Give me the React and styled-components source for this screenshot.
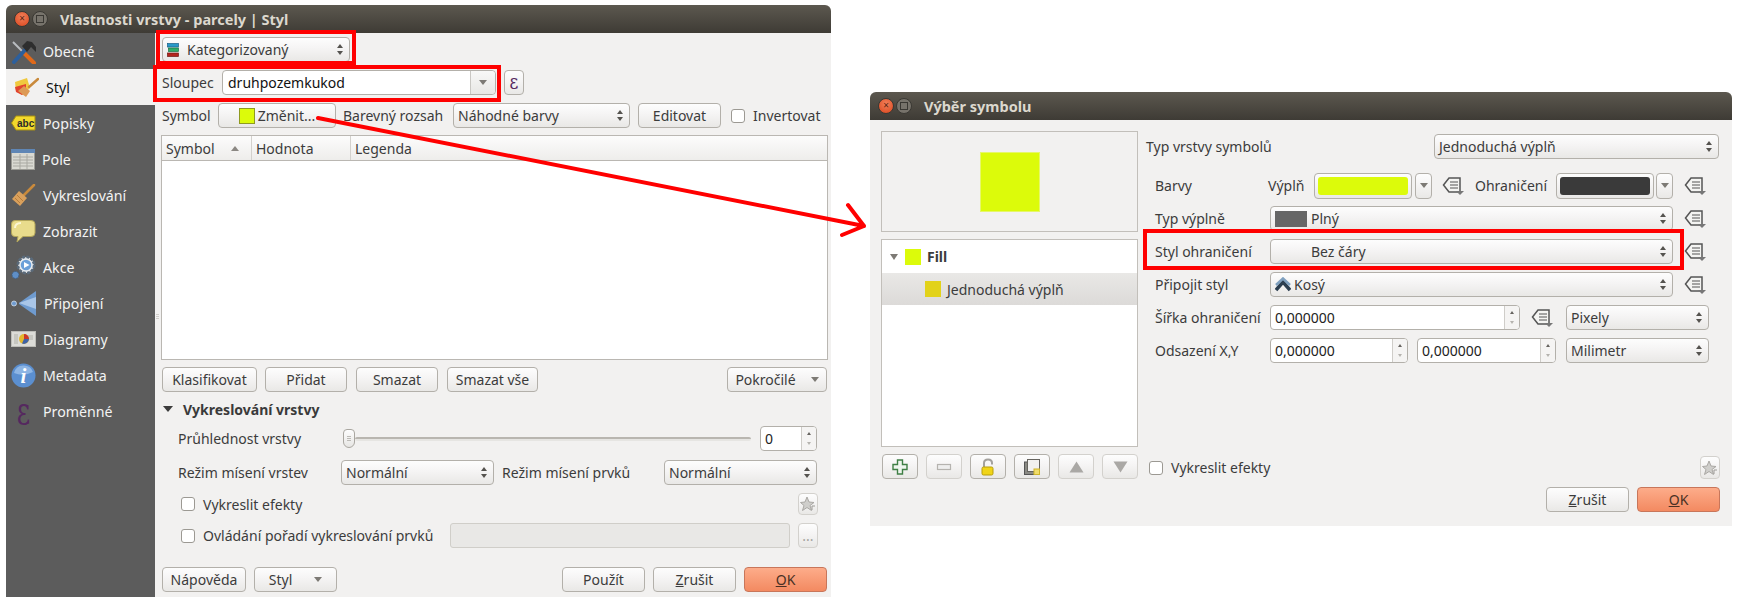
import React from 'react'
import styled, { createGlobalStyle, css } from 'styled-components'

const Global = createGlobalStyle`
    html, body { margin: 0; padding: 0; background: #fff; overflow: hidden; }
    body { font-family: 'Noto Sans', sans-serif; font-size: 14px; color: #3c3c3c; }
    * { box-sizing: border-box; }
`

const Page = styled.div`
    position: relative;
    width: 1743px;
    height: 597px;
    overflow: hidden;
    display: flex;
    align-items: flex-start;
    padding: 5px 0 0 6px;
    gap: 39px;
`

const Window = styled.div`
    width: ${p => p.$w}px;
    margin-top: ${p => p.$mt || 0}px;
    background: #f2f1f0;
    border-radius: 6px 6px 0 0;
    display: flex;
    flex-direction: column;
`

const TitleBar = styled.div`
    height: 28px;
    flex: none;
    display: flex;
    align-items: center;
    padding-left: 8px;
    border-radius: 6px 6px 0 0;
    background: linear-gradient(#5c584f, #3e3b35);
`

const CloseDot = styled.div`
    width: 16px;
    height: 16px;
    border-radius: 50%;
    background: radial-gradient(circle at 50% 35%, #f2805a, #d9451c);
    border: 1px solid #3a3833;
    color: #5a2412;
    font-size: 10px;
    line-height: 13px;
    text-align: center;
`

const MaxDot = styled.div`
    width: 16px;
    height: 16px;
    margin-left: 2px;
    border-radius: 50%;
    background: #77736b;
    border: 1px solid #3a3833;
    display: flex;
    align-items: center;
    justify-content: center;
    &::after {
        content: '';
        width: 6px;
        height: 6px;
        border: 1px solid #3a3833;
    }
`

const TitleText = styled.div`
    margin-left: 12px;
    font-weight: 700;
    font-size: 14.5px;
    color: #dcd8ce;
`

const MainBody = styled.div`
    display: flex;
    height: 564px;
`

const Sidebar = styled.div`
    width: 149px;
    flex: none;
    background: #5c5c5c;
`

const SideItem = styled.div`
    height: 36px;
    display: flex;
    align-items: center;
    padding-left: ${p => p.$active ? 8 : 5}px;
    color: ${p => p.$active ? '#111' : '#f3f3f3'};
    background: ${p => p.$active ? '#f2f1f0' : 'transparent'};
    font-size: 14.2px;
    svg { flex: none; margin-right: 7px; }
`

const Content = styled.div`
    position: relative;
    flex: 1;
    padding-left: 7px;
    &::before {
        content: '';
        position: absolute;
        left: 1px;
        top: 281px;
        width: 3px;
        height: 6px;
        background: repeating-linear-gradient(#cfcdc9 0 1px, transparent 1px 2px);
    }
`

const Row = styled.div`
    display: flex;
    align-items: center;
    height: ${p => p.$h || 25}px;
    margin-top: ${p => p.$mt || 0}px;
    margin-left: ${p => p.$ml || 0}px;
    width: ${p => p.$w ? `${p.$w}px` : 'auto'};
`

const Label = styled.span`
    flex: none;
    white-space: nowrap;
    width: ${p => p.$w ? `${p.$w}px` : 'auto'};
    margin-left: ${p => p.$ml || 0}px;
    color: #3c3c3c;
`

const raised = css`
    flex: none;
    height: 25px;
    border: 1px solid #b3b0aa;
    border-radius: 4px;
    background: linear-gradient(#fdfdfd, #f6f5f5 40%, #e9e8e6);
    color: #3c3c3c;
`

const Button = styled.div`
    ${raised}
    width: ${p => p.$w}px;
    margin-left: ${p => p.$ml || 0}px;
    display: flex;
    align-items: center;
    justify-content: center;
    white-space: nowrap;
    ${p => p.$auto && 'margin-left: auto;'}
    ${p => p.$primary && css`
        background: linear-gradient(#fdac8a, #f38a61);
        border-color: #c8765a;
        color: #4a3024;
    `}
    ${p => p.$off && css`
        opacity: 0.75;
        border-color: #cfccc8;
    `}
`

const MenuCaret = styled.span`
    width: 0;
    height: 0;
    margin-left: ${p => p.$ml || 0}px;
    border-left: 4px solid transparent;
    border-right: 4px solid transparent;
    border-top: 5px solid #7d7a75;
`

const ComboBox = styled.div`
    ${raised}
    width: ${p => p.$w}px;
    margin-left: ${p => p.$ml || 0}px;
    display: flex;
    align-items: center;
    padding: 0 6px 0 4px;
    white-space: nowrap;
`

const ComboText = styled.span`
    flex: 1;
    margin-left: ${p => p.$ml || 0}px;
`

const Steps = styled.span`
    flex: none;
    display: flex;
    flex-direction: column;
    gap: 3px;
    &::before, &::after {
        content: '';
        width: 0;
        height: 0;
        border-left: 3px solid transparent;
        border-right: 3px solid transparent;
    }
    &::before { border-bottom: 4px solid #55534f; }
    &::after { border-top: 4px solid #55534f; }
`

const Combo = ({ w, ml, textMl, icon, children }) => (
    <ComboBox $w={w} $ml={ml}>
        {icon}
        <ComboText $ml={textMl}>{children}</ComboText>
        <Steps />
    </ComboBox>
)

const ColumnInput = styled.div`
    flex: none;
    width: 274px;
    height: 25px;
    display: flex;
    background: #fff;
    border: 1px solid #b3b0aa;
    border-radius: 4px;
    color: #111;
`

const ColumnText = styled.div`
    flex: 1;
    padding-left: 5px;
    line-height: 23px;
`

const ColumnDrop = styled.div`
    width: 25px;
    border-left: 1px solid #c9c7c3;
    border-radius: 0 4px 4px 0;
    background: linear-gradient(#f8f8f7, #e8e7e5);
    display: flex;
    align-items: center;
    justify-content: center;
`

const Check = styled.span`
    flex: none;
    width: 14px;
    height: 14px;
    margin-left: ${p => p.$ml || 0}px;
    background: #fff;
    border: 1px solid #9c9993;
    border-radius: 3px;
`

const Table = styled.div`
    width: 667px;
    height: 225px;
    margin: 7px 0 0 -1px;
    background: #fff;
    border: 1px solid #bab7b2;
`

const TableHead = styled.div`
    height: 25px;
    display: flex;
    border-bottom: 1px solid #bab7b2;
    background: linear-gradient(#fcfcfc, #eeedeb);
`

const HeadCell = styled.div`
    width: ${p => p.$w ? `${p.$w}px` : 'auto'};
    flex: ${p => p.$w ? 'none' : 1};
    display: flex;
    align-items: center;
    justify-content: space-between;
    padding: 1px 12px 0 4px;
    border-right: ${p => p.$w ? '1px solid #d3d1cd' : 'none'};
`

const SortMark = styled.span`
    width: 0;
    height: 0;
    border-left: 4px solid transparent;
    border-right: 4px solid transparent;
    border-bottom: 5px solid #8b8883;
`

const GroupHead = styled.div`
    height: 16px;
    margin-top: 9px;
    display: flex;
    align-items: center;
    padding-left: 1px;
    font-weight: 700;
    color: #3a3a3a;
    &::before {
        content: '';
        width: 0;
        height: 0;
        margin-right: 10px;
        border-left: 5.5px solid transparent;
        border-right: 5.5px solid transparent;
        border-top: 6px solid #3c3c3c;
    }
`

const Slider = styled.div`
    flex: none;
    width: 408px;
    margin-left: 2px;
    display: flex;
    align-items: center;
`

const SliderHandle = styled.div`
    flex: none;
    width: 12px;
    height: 19px;
    border: 1px solid #aaa7a1;
    border-radius: 4px 4px 6px 6px;
    background: linear-gradient(#fdfdfd, #e7e6e4);
    display: flex;
    align-items: center;
    justify-content: center;
    &::after {
        content: '';
        width: 4px;
        height: 5px;
        background: repeating-linear-gradient(#bcbab6 0 1px, transparent 1px 2px);
    }
`

const SliderTrack = styled.div`
    flex: 1;
    height: 4px;
    border-radius: 2px;
    background: linear-gradient(#b9b6b0 0 2px, #e6e5e2 2px);
`

const SpinBox = styled.div`
    flex: none;
    width: ${p => p.$w}px;
    height: 25px;
    margin-left: ${p => p.$ml || 0}px;
    display: flex;
    background: #fff;
    border: 1px solid #b3b0aa;
    border-radius: 4px;
    overflow: hidden;
`

const SpinText = styled.div`
    flex: 1;
    padding-left: 4px;
    line-height: 23px;
    color: #222;
`

const SpinSteps = styled.div`
    flex: none;
    width: 15px;
    background: #f5f4f3;
    border-left: 1px solid #cfcdc9;
    display: flex;
    flex-direction: column;
    align-items: center;
    justify-content: center;
    gap: 7px;
    &::before, &::after {
        content: '';
        width: 0;
        height: 0;
        border-left: 2.5px solid transparent;
        border-right: 2.5px solid transparent;
    }
    &::before { border-bottom: 3px solid #66635f; }
    &::after { border-top: 3px solid #b5b3af; }
`

const DisabledField = styled.div`
    flex: none;
    width: 340px;
    height: 25px;
    margin-left: auto;
    background: #e9e8e6;
    border: 1px solid #d0cec9;
    border-radius: 3px;
`

const ToolButton = styled.div`
    ${raised}
    width: ${p => p.$w}px;
    height: ${p => p.$h || 25}px;
    margin-left: ${p => p.$ml || 0}px;
    display: flex;
    align-items: center;
    justify-content: center;
    ${p => p.$auto && 'margin-left: auto;'}
    ${p => p.$off && css`
        border-color: #d3d1cd;
        color: #a5a39f;
    `}
`

const Epsilon = styled.span`
    flex: none;
    width: ${p => p.$box}px;
    margin-right: ${p => p.$mr || 0}px;
    text-align: center;
    font-family: 'DejaVu Serif', serif;
    font-size: ${p => p.$size}px;
    line-height: 25px;
    color: #55285f;
    transform: scaleY(${p => p.$stretch || 1});
`

const Highlight = styled.div`
    position: relative;
    flex: none;
    display: flex;
    align-items: center;
    &::after {
        content: '';
        position: absolute;
        top: ${p => p.$t}px;
        right: ${p => p.$r}px;
        bottom: ${p => p.$b}px;
        left: ${p => p.$l}px;
        border: 4px solid #ff0000;
        pointer-events: none;
    }
`

const ArrowLayer = styled.svg`
    position: absolute;
    left: 0;
    top: 0;
    pointer-events: none;
`

const SymbolBody = styled.div`
    display: flex;
    height: 359px;
`

const LeftColumn = styled.div`
    flex: none;
    width: 268px;
    padding-left: 11px;
    padding-top: 11px;
`

const Preview = styled.div`
    height: 101px;
    border: 1px solid #c2bfba;
    display: flex;
    align-items: center;
    justify-content: center;
`

const PreviewSwatch = styled.div`
    width: 60px;
    height: 60px;
    background: #dcfb0a;
    border: 1px solid #e6f76a;
`

const LayerList = styled.div`
    height: 208px;
    margin-top: 7px;
    background: #fff;
    border: 1px solid #c2bfba;
`

const LayerRow = styled.div`
    height: ${p => p.$h}px;
    display: flex;
    align-items: center;
    padding-left: ${p => p.$pad}px;
    ${p => p.$selected && 'background: linear-gradient(#e9e8e6, #dcdad8);'}
    ${p => p.$bold && 'font-weight: 700;'}
`

const TreeCaret = styled.span`
    width: 0;
    height: 0;
    margin-right: 7px;
    border-left: 4px solid transparent;
    border-right: 4px solid transparent;
    border-top: 6px solid #7d7a75;
`

const LayerSwatch = styled.span`
    flex: none;
    width: ${p => p.$w || 16}px;
    height: 16px;
    margin-right: ${p => p.$mr ?? 6}px;
    background: ${p => p.$color};
    ${p => p.$framed && 'border: 1px solid #8f9a20;'}
`

const ToolRow = styled.div`
    display: flex;
    gap: 8px;
    margin: 7px 0 0 1px;
`

const RightColumn = styled.div`
    flex: 1;
    display: flex;
    flex-direction: column;
    margin-left: 8px;
    padding: 14px 12px 0 0;
`

const ColorButton = styled.div`
    ${raised}
    width: 98px;
    height: 26px;
    padding: 3px;
`

const ColorFill = styled.div`
    height: 100%;
    border-radius: 3px;
    background: ${p => p.$color};
`

const ColorDrop = styled.div`
    ${raised}
    width: 17px;
    height: 26px;
    margin-left: ${p => p.$ml}px;
    display: flex;
    align-items: center;
    justify-content: center;
`

const BottomCheck = styled.div`
    display: flex;
    align-items: center;
    height: 23px;
    margin-top: auto;
    padding-left: 3px;
`

const Footer = styled.div`
    display: flex;
    justify-content: flex-end;
    gap: 8px;
    padding: 8px 12px 14px 0;
`

const Svg = ({ w, h, ml, children }) => (
    <svg width={w} height={h} viewBox={`0 0 ${w} ${h}`} style={ml ? { marginLeft: ml, flex: 'none' } : { flex: 'none' }}>
        {children}
    </svg>
)

const ToolsIcon = () => (
    <Svg w={25} h={25}>
        <path d="M2 3 L13 14" stroke="#b9bcc0" strokeWidth="2" />
        <path d="M13 14 L23 24" stroke="#e0691a" strokeWidth="4" strokeLinecap="round" />
        <path d="M3 23 L15 10" stroke="#2c5f9c" strokeWidth="4" strokeLinecap="round" />
        <path d="M11 7 L16 2 L21 3 L25 8 L25 13 L20 8 L16 13 Z" fill="#2e2e2e" />
    </Svg>
)

const BrushPaintIcon = () => (
    <Svg w={25} h={20}>
        <path d="M1 5 L13 1 L16 11 L8 18 L2 14 Z" fill="#f0c93e" />
        <path d="M1 10 L12 7 L12 15 L8 18 L2 15 Z" fill="#e2432e" />
        <path d="M15 10 L24 2" stroke="#c98a3c" strokeWidth="2.5" strokeLinecap="round" />
        <path d="M10 9 L16 14 L12 20 L4 14 Z" fill="#dd9a55" />
    </Svg>
)

const LabelIcon = () => (
    <Svg w={25} h={16}>
        <path d="M0.5 8 L5 1 H24 V15 H5 Z" fill="#f3d92c" stroke="#a78f12" />
        <text x="6" y="12" fontFamily="Liberation Sans" fontSize="10" fontWeight="700" fill="#2a2a2a">abc</text>
    </Svg>
)

const TableIcon = () => (
    <Svg w={24} h={21}>
        <rect x="0.5" y="0.5" width="23" height="20" fill="#d9d9d2" stroke="#9a9a94" />
        <rect x="0" y="0" width="24" height="4" fill="#5f86b5" />
        <path d="M2 8 H22 M2 11 H22 M2 14 H22 M2 17 H22 M9 5 V20 M16 5 V20" stroke="#a9a9a2" strokeWidth="1" />
    </Svg>
)

const BrushIcon = () => (
    <Svg w={25} h={23}>
        <path d="M13 11 L23 1" stroke="#c98a3c" strokeWidth="2.5" strokeLinecap="round" />
        <path d="M8 7 L16 14 L9 22 L1 15 Z" fill="#d9a05c" />
        <path d="M6 11 L12 17 M4 14 L9 19" stroke="#b67c3a" strokeWidth="1" />
    </Svg>
)

const BubbleIcon = () => (
    <Svg w={25} h={23}>
        <path d="M4 0.5 H20 Q24 0.5 24 4 V13 Q24 16.5 20 16.5 H12 L6 22 L7 16.5 H4 Q0.5 16.5 0.5 13 V4 Q0.5 0.5 4 0.5 Z" fill="#e9dc8c" stroke="#b3a65a" />
        <path d="M4 8 Q4 3 10 3" stroke="#fbf6d4" strokeWidth="2" fill="none" />
    </Svg>
)

const GearIcon = () => (
    <Svg w={25} h={26}>
        <circle cx="15" cy="11" r="8" fill="#dfe4ea" stroke="#5a6a7a" strokeWidth="3" strokeDasharray="3 1.2" />
        <circle cx="15" cy="11" r="6" fill="#6a9fd8" stroke="#e6eaee" strokeWidth="1.5" />
        <path d="M13 8 L18.5 11 L13 14 Z" fill="#fff" />
        <circle cx="4.5" cy="21" r="3.5" fill="#5f8fc7" stroke="#3f5f86" strokeDasharray="2 1" />
    </Svg>
)

const ConnectIcon = () => (
    <Svg w={26} h={25}>
        <path d="M8 12 L25 0 V25 L8 13 Z" fill="#6f9bcf" />
        <path d="M8 12 L25 6 V18 Z" fill="#a9c6e8" />
        <circle cx="3" cy="12.5" r="2.5" fill="#6f9bcf" stroke="#dfe9f5" strokeWidth="0.7" />
    </Svg>
)

const DiagramIcon = () => (
    <Svg w={25} h={16}>
        <rect x="0.5" y="0.5" width="24" height="15" fill="#dcdcd8" stroke="#bdbdb8" />
        <path d="M3 3 H7 V13 H3 Z M17 4 H22 V9 H17 Z" fill="#c6c6c0" />
        <circle cx="13" cy="8" r="5" fill="#e4b72e" />
        <path d="M13 8 V3 A5 5 0 0 1 18 8 Z" fill="#c9362c" />
        <path d="M13 8 H18 A5 5 0 0 1 11 12.5 Z" fill="#3f63a8" />
    </Svg>
)

const InfoIcon = () => (
    <Svg w={25} h={25}>
        <circle cx="12.5" cy="12.5" r="12" fill="#5b8fd0" />
        <path d="M3 10 A10 10 0 0 1 22 9 Q12 14 3 10 Z" fill="#8db5e4" />
        <text x="12.5" y="20" textAnchor="middle" fontFamily="Liberation Serif" fontSize="21" fontWeight="700" fontStyle="italic" fill="#fff">i</text>
    </Svg>
)

const sections = [
    { label: 'Obecné', icon: <ToolsIcon /> },
    { label: 'Styl', icon: <BrushPaintIcon />, active: true },
    { label: 'Popisky', icon: <LabelIcon /> },
    { label: 'Pole', icon: <TableIcon /> },
    { label: 'Vykreslování', icon: <BrushIcon /> },
    { label: 'Zobrazit', icon: <BubbleIcon /> },
    { label: 'Akce', icon: <GearIcon /> },
    { label: 'Připojení', icon: <ConnectIcon /> },
    { label: 'Diagramy', icon: <DiagramIcon /> },
    { label: 'Metadata', icon: <InfoIcon /> },
    { label: 'Proměnné', icon: <Epsilon $box={25} $mr={7} $size={26} $stretch={1.5}>ε</Epsilon> },
]

const RendererIcon = () => (
    <Svg w={12} h={14}>
        <rect x="0.5" y="0.5" width="11" height="3.5" fill="#2a9ac9" stroke="#1c5f86" strokeWidth="0.7" />
        <rect x="1.5" y="5" width="10" height="3.5" fill="#2fae6a" stroke="#1c6f43" strokeWidth="0.7" />
        <rect x="0.5" y="10" width="11" height="3.5" fill="#b3261e" stroke="#701a14" strokeWidth="0.7" />
    </Svg>
)

const DataIcon = ({ ml }) => (
    <Svg w={23} h={20} ml={ml}>
        <path d="M1.5 9 L7 2 H18 V16 H7 Z" fill="#f4f4f2" stroke="#555" strokeWidth="1.5" />
        <path d="M8 6 H16 M8 9 H16 M8 12 H16" stroke="#555" strokeWidth="1" />
        <path d="M14 15 H22 L18 19 Z" fill="#777" />
    </Svg>
)

const StarIcon = () => (
    <Svg w={16} h={16}>
        <path d="M7 1 L9 6 L14 6.5 L10 9.5 L11.5 14.5 L7 11.5 L2.5 14.5 L4 9.5 L0.5 6.5 L5 6 Z" fill="#cfcecb" stroke="#aaa8a4" />
        <path d="M12 14 V10 H15" stroke="#9d9b97" fill="none" />
    </Svg>
)

const MiterIcon = () => (
    <Svg w={16} h={16}>
        <path d="M1 13 L8 5 L15 13" stroke="#2c3e50" strokeWidth="3.5" fill="none" />
        <path d="M1 8 L8 1.5 L15 8" stroke="#7fa0bf" strokeWidth="2.5" fill="none" />
    </Svg>
)

const PlusIcon = () => (
    <Svg w={16} h={16}>
        <path d="M5.5 1 H10.5 V5.5 H15 V10.5 H10.5 V15 H5.5 V10.5 H1 V5.5 H5.5 Z" fill="#eef5ee" stroke="#3f7f45" strokeWidth="1.4" />
    </Svg>
)

const MinusIcon = () => (
    <Svg w={16} h={8}>
        <rect x="1.5" y="1.5" width="13" height="5" fill="#eee" stroke="#b5b3af" strokeWidth="1.2" />
    </Svg>
)

const LockIcon = () => (
    <Svg w={14} h={18}>
        <path d="M3 9 V5 Q3 1.5 7 1.5 Q11 1.5 11 5 V6.5" stroke="#a3a19d" strokeWidth="2" fill="none" />
        <rect x="1" y="9" width="11" height="8" rx="1.5" fill="#f0d418" stroke="#b79d0c" />
    </Svg>
)

const DuplicateIcon = () => (
    <Svg w={16} h={16}>
        <rect x="0.5" y="3" width="11" height="12.5" fill="#8a8a84" stroke="#555" />
        <rect x="3.5" y="0.5" width="12" height="12" fill="#f2f1ef" stroke="#66645f" />
        <rect x="10" y="10" width="5.5" height="5.5" fill="#f1dd6a" stroke="#cdb42a" />
    </Svg>
)

const UpIcon = () => (
    <Svg w={15} h={12}>
        <path d="M7.5 0.5 L14.5 11.5 H0.5 Z" fill="#aaa8a5" />
    </Svg>
)

const DownIcon = () => (
    <Svg w={15} h={12}>
        <path d="M7.5 11.5 L14.5 0.5 H0.5 Z" fill="#aaa8a5" />
    </Svg>
)

const App = () => (
    <Page>
        <Global />
        <Window $w={825}>
            <TitleBar>
                <CloseDot>×</CloseDot>
                <MaxDot />
                <TitleText>Vlastnosti vrstvy - parcely | Styl</TitleText>
            </TitleBar>
            <MainBody>
                <Sidebar>
                    {sections.map(s => (
                        <SideItem key={s.label} $active={s.active}>
                            {s.icon}
                            {s.label}
                        </SideItem>
                    ))}
                </Sidebar>
                <Content>
                    <Row $mt={4}>
                        <Highlight $t={-7} $r={-6} $b={-3} $l={-6}>
                            <Combo w={188} icon={<RendererIcon />} textMl={8}>Kategorizovaný</Combo>
                        </Highlight>
                    </Row>
                    <Row $mt={8}>
                        <Highlight $t={-5} $r={-5} $b={-7} $l={-9}>
                            <Label $w={60}>Sloupec</Label>
                            <ColumnInput>
                                <ColumnText>druhpozemkukod</ColumnText>
                                <ColumnDrop><MenuCaret /></ColumnDrop>
                            </ColumnInput>
                        </Highlight>
                        <ToolButton $w={20} $ml={8}>
                            <Epsilon $box={18} $size={17} $stretch={1.2}>ε</Epsilon>
                        </ToolButton>
                    </Row>
                    <Row $mt={8}>
                        <Label $w={56}>Symbol</Label>
                        <Button $w={118}>
                            <LayerSwatch $color="#dcfb0a" $framed $mr={3} />
                            Změnit...
                        </Button>
                        <Label $w={110} $ml={7}>Barevný rozsah</Label>
                        <Combo w={177}>Náhodné barvy</Combo>
                        <Button $w={83} $ml={8}>Editovat</Button>
                        <Check $ml={10} />
                        <Label $ml={8}>Invertovat</Label>
                    </Row>
                    <Table>
                        <TableHead>
                            <HeadCell $w={90}>Symbol<SortMark /></HeadCell>
                            <HeadCell $w={99}>Hodnota</HeadCell>
                            <HeadCell>Legenda</HeadCell>
                        </TableHead>
                    </Table>
                    <Row $mt={7} $w={665}>
                        <Button $w={95}>Klasifikovat</Button>
                        <Button $w={82} $ml={8}>Přidat</Button>
                        <Button $w={82} $ml={9}>Smazat</Button>
                        <Button $w={91} $ml={9}>Smazat vše</Button>
                        <Button $w={100} $auto>Pokročilé<MenuCaret $ml={15} /></Button>
                    </Row>
                    <GroupHead>Vykreslování vrstvy</GroupHead>
                    <Row $mt={9}>
                        <Label $w={163} $ml={16}>Průhlednost vrstvy</Label>
                        <Slider>
                            <SliderHandle />
                            <SliderTrack />
                        </Slider>
                        <SpinBox $w={57} $ml={9}>
                            <SpinText>0</SpinText>
                            <SpinSteps />
                        </SpinBox>
                    </Row>
                    <Row $mt={9}>
                        <Label $w={163} $ml={16}>Režim mísení vrstev</Label>
                        <Combo w={153}>Normální</Combo>
                        <Label $w={162} $ml={8}>Režim mísení prvků</Label>
                        <Combo w={153}>Normální</Combo>
                    </Row>
                    <Row $mt={8} $h={22} $w={656}>
                        <Check $ml={19} />
                        <Label $ml={8}>Vykreslit efekty</Label>
                        <ToolButton $w={20} $h={22} $auto $off><StarIcon /></ToolButton>
                    </Row>
                    <Row $mt={8} $w={656}>
                        <Check $ml={19} />
                        <Label $ml={8}>Ovládání pořadí vykreslování prvků</Label>
                        <DisabledField />
                        <ToolButton $w={20} $ml={8} $off>...</ToolButton>
                    </Row>
                    <Row $mt={19} $w={665}>
                        <Button $w={84}>Nápověda</Button>
                        <Button $w={83} $ml={8}>Styl<MenuCaret $ml={22} /></Button>
                        <Button $w={83} $auto>Použít</Button>
                        <Button $w={83} $ml={8}><span><u>Z</u>rušit</span></Button>
                        <Button $w={83} $ml={8} $primary><span><u>O</u>K</span></Button>
                    </Row>
                </Content>
            </MainBody>
        </Window>

        <Window $w={862} $mt={87}>
            <TitleBar>
                <CloseDot>×</CloseDot>
                <MaxDot />
                <TitleText>Výběr symbolu</TitleText>
            </TitleBar>
            <SymbolBody>
                <LeftColumn>
                    <Preview><PreviewSwatch /></Preview>
                    <LayerList>
                        <LayerRow $h={33} $pad={8} $bold>
                            <TreeCaret />
                            <LayerSwatch $color="#dcfb0a" />
                            Fill
                        </LayerRow>
                        <LayerRow $h={32} $pad={43} $selected>
                            <LayerSwatch $color="#e2d21a" />
                            Jednoduchá výplň
                        </LayerRow>
                    </LayerList>
                    <ToolRow>
                        <ToolButton $w={36}><PlusIcon /></ToolButton>
                        <ToolButton $w={36} $off><MinusIcon /></ToolButton>
                        <ToolButton $w={36}><LockIcon /></ToolButton>
                        <ToolButton $w={36}><DuplicateIcon /></ToolButton>
                        <ToolButton $w={36} $off><UpIcon /></ToolButton>
                        <ToolButton $w={36} $off><DownIcon /></ToolButton>
                    </ToolRow>
                </LeftColumn>
                <RightColumn>
                    <Row>
                        <Label $w={288}>Typ vrstvy symbolů</Label>
                        <Combo w={285}>Jednoduchá výplň</Combo>
                    </Row>
                    <Row $mt={14} $ml={9}>
                        <Label $w={113}>Barvy</Label>
                        <Label $w={46}>Výplň</Label>
                        <ColorButton><ColorFill $color="#dcfb0a" /></ColorButton>
                        <ColorDrop $ml={3}><MenuCaret /></ColorDrop>
                        <DataIcon ml={10} />
                        <Label $w={81} $ml={10}>Ohraničení</Label>
                        <ColorButton><ColorFill $color="#3a3a3a" /></ColorButton>
                        <ColorDrop $ml={2}><MenuCaret /></ColorDrop>
                        <DataIcon ml={11} />
                    </Row>
                    <Row $mt={8} $ml={9}>
                        <Label $w={115}>Typ výplně</Label>
                        <Combo
                            w={403}
                            textMl={4}
                            icon={<LayerSwatch $color="#666" $w={32} $mr={0} />}
                        >
                            Plný
                        </Combo>
                        <DataIcon ml={11} />
                    </Row>
                    <Row $mt={8} $ml={9}>
                        <Highlight $t={-10} $r={-11} $b={-6} $l={-12}>
                            <Label $w={115}>Styl ohraničení</Label>
                            <Combo w={403} textMl={36}>Bez čáry</Combo>
                        </Highlight>
                        <DataIcon ml={11} />
                    </Row>
                    <Row $mt={8} $ml={9}>
                        <Label $w={115}>Připojit styl</Label>
                        <Combo w={403} textMl={3} icon={<MiterIcon />}>Kosý</Combo>
                        <DataIcon ml={11} />
                    </Row>
                    <Row $mt={8} $ml={9}>
                        <Label $w={115}>Šířka ohraničení</Label>
                        <SpinBox $w={250}>
                            <SpinText>0,000000</SpinText>
                            <SpinSteps />
                        </SpinBox>
                        <DataIcon ml={11} />
                        <Combo w={143} ml={12}>Pixely</Combo>
                    </Row>
                    <Row $mt={8} $ml={9}>
                        <Label $w={115}>Odsazení X,Y</Label>
                        <SpinBox $w={138}>
                            <SpinText>0,000000</SpinText>
                            <SpinSteps />
                        </SpinBox>
                        <SpinBox $w={139} $ml={9}>
                            <SpinText>0,000000</SpinText>
                            <SpinSteps />
                        </SpinBox>
                        <Combo w={143} ml={10}>Milimetr</Combo>
                    </Row>
                    <BottomCheck>
                        <Check />
                        <Label $ml={8}>Vykreslit efekty</Label>
                        <ToolButton $w={20} $h={23} $auto $off><StarIcon /></ToolButton>
                    </BottomCheck>
                </RightColumn>
            </SymbolBody>
            <Footer>
                <Button $w={83}><span><u>Z</u>rušit</span></Button>
                <Button $w={83} $primary><span><u>O</u>K</span></Button>
            </Footer>
        </Window>

        <ArrowLayer width="1743" height="597" viewBox="0 0 1743 597">
            <path d="M318 118 L864 226 M848 205 L864 226 L842 235" stroke="#ff0000" strokeWidth="4" fill="none" strokeLinecap="round" strokeLinejoin="round" />
        </ArrowLayer>
    </Page>
)

export default App
